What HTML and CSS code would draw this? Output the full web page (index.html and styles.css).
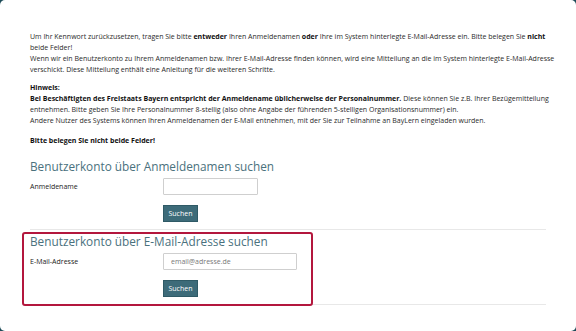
FILE: index.html
```html
<!DOCTYPE html>
<html lang="de">
<head>
<meta charset="utf-8">
<link rel="stylesheet" href="styles.css">
</head>
<body>
<div class="window">
  <div class="content">
    <p class="text">Um Ihr Kennwort zurückzusetzen, tragen Sie bitte <b>entweder</b> Ihren Anmeldenamen <b>oder</b> Ihre im System hinterlegte E-Mail-Adresse ein. Bitte belegen Sie <b>nicht</b> <span class="nowrap">beide Felder!</span><br>Wenn wir ein Benutzerkonto zu Ihrem Anmeldenamen bzw. Ihrer E-Mail-Adresse finden können, wird eine Mitteilung an die im System hinterlegte E-Mail-Adresse verschickt. Diese Mitteilung enthält eine Anleitung für die weiteren Schritte.</p>
    <p class="text hint"><b>Hinweis:</b><br><b>Bei Beschäftigten des Freistaats Bayern entspricht der Anmeldename üblicherweise der Personalnummer.</b> Diese können Sie z.B. Ihrer Bezügemitteilung entnehmen. Bitte geben Sie Ihre Personalnummer 8-stellig (also ohne Angabe der führenden 5-stelligen Organisationsnummer) ein.<br>Andere Nutzer des Systems können Ihren Anmeldenamen der E-Mail entnehmen, mit der Sie zur Teilnahme an BayLern eingeladen wurden.</p>
    <p class="text warn"><b>Bitte belegen Sie nicht beide Felder!</b></p>

    <div class="sections">
      <section class="search first">
        <h2 class="search-title">Benutzerkonto über Anmeldenamen suchen</h2>
        <div class="row">
          <label class="label">Anmeldename</label>
          <input class="field field-short" type="text">
        </div>
        <div class="row">
          <span class="label"></span>
          <button class="btn">Suchen</button>
        </div>
      </section>

      <section class="search second">
        <div class="highlight"></div>
        <h2 class="search-title">Benutzerkonto über E-Mail-Adresse suchen</h2>
        <div class="row">
          <label class="label">E-Mail-Adresse</label>
          <input class="field field-long" type="text" placeholder="email@adresse.de">
        </div>
        <div class="row">
          <span class="label"></span>
          <button class="btn">Suchen</button>
        </div>
      </section>
    </div>
  </div>
</div>
</body>
</html>
```

FILE: styles.css
```css
html, body {
  margin: 0;
  padding: 0;
}
body {
  background: #1d4b58;
  font-family: "Open Sans", "Liberation Sans", sans-serif;
  color: #2a2a2a;
}
.window {
  width: 576px;
  height: 331px;
  background: #fff;
  border-radius: 5px;
  box-sizing: border-box;
  padding: 31px 0 0 30px;
  overflow: hidden;
}
.content {
  width: 527px;
}
.nowrap {
  white-space: nowrap;
}
.text {
  margin: 0;
  font-size: 7px;
  line-height: 11px;
}
.text b {
  color: #111;
}
.hint {
  margin-top: 7px;
}
.warn {
  margin-top: 9px;
}
.sections {
  width: 516px;
}
.search {
  position: relative;
  border-bottom: 1px solid #e8e8e8;
  padding: 3px 0 7px;
}
.search.first {
  margin-top: 9px;
}
.search-title {
  margin: 0 0 3px;
  font-size: 11.8px;
  line-height: 17px;
  font-weight: 400;
  color: #4a717d;
}
.row {
  display: flex;
  align-items: center;
}
.row + .row {
  margin-top: 10px;
}
.label {
  width: 133px;
  font-size: 7px;
  color: #222;
}
.field {
  height: 17px;
  box-sizing: border-box;
  border: 1px solid #cfcfcf;
  border-radius: 1px;
  padding: 0 7px;
  font-family: inherit;
  font-size: 7px;
  color: #333;
}
.field::placeholder {
  color: #777;
}
.field-short {
  width: 95px;
}
.field-long {
  width: 134px;
}
.btn {
  width: 35px;
  height: 17px;
  padding: 0;
  border: 1px solid #2f5a66;
  border-radius: 0;
  background: #3d6b79;
  color: #fff;
  font-family: inherit;
  font-size: 7px;
}
.highlight {
  position: absolute;
  top: 2px;
  left: -8px;
  width: 291px;
  height: 74px;
  box-sizing: border-box;
  border: 2px solid #b3173d;
  border-radius: 3px;
  pointer-events: none;
}
```
